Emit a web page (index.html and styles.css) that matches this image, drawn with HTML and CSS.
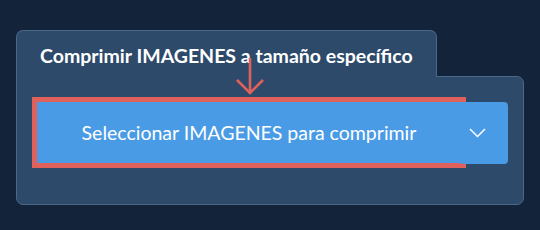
FILE: index.html
```html
<!DOCTYPE html>
<html lang="es">
<head>
    <meta charset="UTF-8">
    <title>Comprimir imagenes</title>
    <link rel="stylesheet" href="styles.css">
</head>
<body>
<div class="page">
    <div class="compressor">
        <!--pestaña-->
        <div class="tab">Comprimir IMAGENES a tamaño específico</div>

        <!--panel-->
        <div class="panel">
            <div class="uploadRow">
                <div class="selectButton">Seleccionar IMAGENES para comprimir</div>
                <div class="dropButton">
                    <svg width="17" height="10" viewBox="0 0 17 10">
                        <polyline points="1,1 8.5,8.5 16,1" fill="none" stroke="#ffffff" stroke-width="1.5"/>
                    </svg>
                </div>
            </div>
        </div>

        <!--flecha-->
        <svg class="hintArrow" width="30" height="40" viewBox="0 0 30 40">
            <line x1="15" y1="0" x2="15" y2="36" stroke="#e0605c" stroke-width="2.6"/>
            <polyline points="2,22 15,35 28,22" fill="none" stroke="#e0605c" stroke-width="2.6"/>
        </svg>
    </div>
</div>
</body>
</html>
```

FILE: styles.css
```css
* {
    margin: 0;
    padding: 0;
    box-sizing: border-box;
}

html, body {
    height: 100%;
}

body {
    background-color: #12233a;
    font-family: Lato, "Open Sans", sans-serif;
    color: #ffffff;
}

.page {
    padding: 30px 16px;
}

.compressor {
    position: relative;
    width: 508px;
}

.tab {
    position: relative;
    z-index: 1;
    width: 421px;
    height: 47px;
    margin-bottom: -1px;
    padding: 13px 0 0 23px;
    background-color: #2d4a6a;
    border: 1px solid #4b6888;
    border-bottom: none;
    border-radius: 7px 7px 0 0;
    font-size: 19.5px;
    font-weight: 700;
    line-height: 24px;
}

.panel {
    height: 129px;
    padding: 25px 0 0 20px;
    background-color: #2d4a6a;
    border: 1px solid #4b6888;
    border-radius: 0 7px 7px 7px;
}

.uploadRow {
    display: flex;
    align-items: flex-start;
}

.selectButton {
    width: 424px;
    height: 61px;
    line-height: 61px;
    text-align: center;
    background-color: #4a9be6;
    outline: 5px solid #e0605c;
    font-size: 19.5px;
}

.dropButton {
    width: 47px;
    height: 62px;
    display: flex;
    align-items: center;
    padding-left: 8px;
    background-color: #4a9be6;
    border-radius: 0 4px 4px 0;
}

.hintArrow {
    position: absolute;
    z-index: 2;
    left: 219px;
    top: 28px;
}
```
